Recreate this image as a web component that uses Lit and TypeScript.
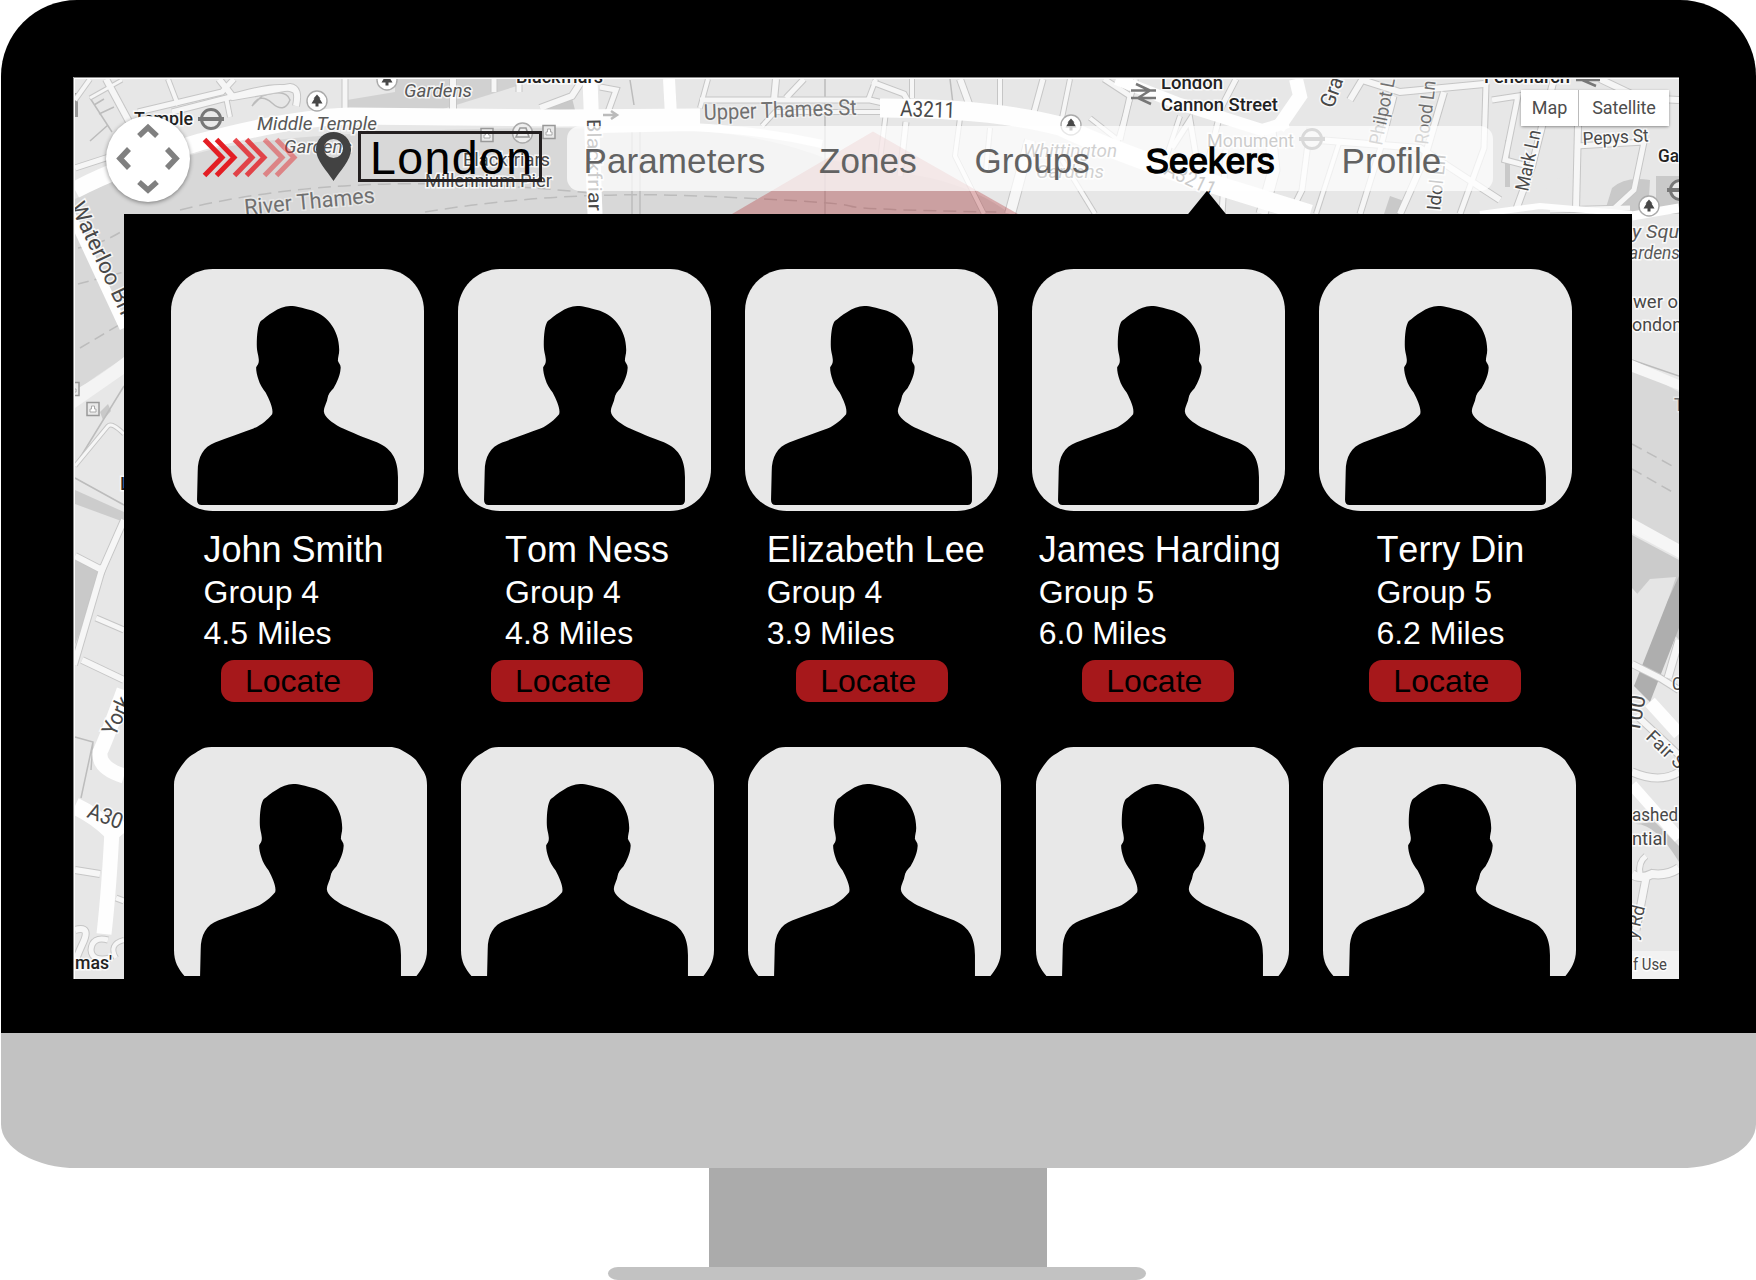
import { LitElement, html, svg, css } from "lit";
import { customElement, property } from "lit/decorators.js";
import { classMap } from "lit/directives/class-map.js";

interface Label {
  t: string;
  x: number;
  y: number;
  w?: number;
  s?: number;
  r?: number;
  k?: string;
}

interface Seeker {
  name: string;
  group: string;
  miles: string;
  indent: number;
  action: number;
}

// Streets as [path, width]
const STREETS: [string, number][] = [
  ["M75 168 L112 156 L140 138", 5],
  ["M75 100 L90 79", 4],
  ["M106 79 L134 131", 6],
  ["M90 98 L122 80", 3],
  ["M138 112 L222 92 L234 79", 5],
  ["M168 79 L178 105", 4],
  ["M219 79 L233 97 L290 87 Q300 88 296 106", 6],
  ["M172 112 L250 92 Q282 84 294 90", 5],
  ["M226 97 L230 117", 4],
  ["M345 79 L345 112", 5],
  ["M453 79 L453 110", 6],
  ["M494 79 L494 92", 5],
  ["M519 79 L519 92", 5],
  ["M540 108 L572 96 L583 79", 6],
  ["M608 112 L616 90 L600 87", 5],
  ["M700 108 L708 79", 4],
  ["M776 79 L774 100", 6],
  ["M786 98 L804 79", 5],
  ["M700 100 L870 100 L905 108", 5],
  ["M762 126 L775 112 L880 112", 4],
  ["M868 100 L876 79", 4],
  ["M872 82 L904 94 L914 112", 5],
  ["M912 79 L912 98", 4],
  ["M960 79 L972 112", 6],
  ["M1000 79 L1000 106", 4],
  ["M1043 79 L1034 112", 5],
  ["M1070 79 L1062 118", 4],
  ["M886 112 L880 160", 4],
  ["M906 122 L900 176", 5],
  ["M960 118 L955 156 L984 214", 4],
  ["M990 128 L986 170", 4],
  ["M1030 140 L1010 214", 10],
  ["M1062 160 L1095 214", 4],
  ["M1104 79 L1130 96 L1120 140", 5],
  ["M1090 118 L1118 140 L1136 79", 4],
  ["M1172 148 L1190 120 L1200 180", 5],
  ["M1180 116 L1162 170", 4],
  ["M1236 79 L1222 106 L1206 170", 5],
  ["M1226 150 L1222 214", 5],
  ["M1270 130 L1274 170 L1262 214", 11],
  ["M1310 128 L1302 190 L1290 214", 5],
  ["M1340 140 L1316 214", 4],
  ["M1350 100 L1362 80 L1400 92 L1484 84", 6],
  ["M1318 140 L1420 148 L1500 200", 6],
  ["M1394 96 L1380 150 L1360 214", 5],
  ["M1444 92 L1424 160 L1400 214", 6],
  ["M1486 84 L1484 148 L1460 214", 5],
  ["M1492 100 L1518 96 L1505 160 L1528 166", 5],
  ["M1554 79 L1532 166 L1516 210", 6],
  ["M1578 126 L1576 210", 6],
  ["M1550 210 L1630 208", 5],
  ["M1576 146 L1644 142 L1634 190 L1608 214", 5],
  ["M1600 79 L1640 98 L1679 100", 6],
  ["M75 466 L108 426 Q112 422 124 434", 3],
  ["M75 556 L102 570 L124 520", 6],
  ["M103 566 L74 665", 6],
  ["M96 618 L124 630", 5],
  ["M82 660 L124 680", 6],
  ["M75 870 L100 874", 6],
  ["M116 898 L124 901", 5],
  ["M75 930 Q92 925 82 945 Q76 958 75 964", 6],
  ["M108 940 Q92 936 91 950 Q92 962 110 958", 5],
  ["M124 940 Q108 944 116 958", 4],
  ["M1668 678 L1679 640", 7],
  ["M1632 664 L1660 678 L1679 690", 6],
  ["M1636 715 L1679 755", 6],
  ["M1632 772 Q1660 784 1679 772", 7],
  ["M1632 874 Q1640 880 1652 874 Q1668 876 1679 868", 8],
  ["M1640 874 Q1638 862 1646 856", 5],
  ["M1646 878 L1636 930", 7],
];

const AVENUES: [string, number][] = [
  ["M75 190 Q120 166 200 142 Q290 118 350 116 L560 118 L700 117", 17],
  ["M590 79 L595 214", 15],
  ["M669 79 L671 116", 12],
  ["M600 129 L690 127 Q760 130 822 144", 8],
  ["M880 108 Q990 108 1060 126 Q1110 150 1200 180 L1310 214", 19],
  ["M1116 79 L1180 104 L1262 130 L1288 122", 12],
  ["M1278 128 L1300 96 L1296 79", 14],
  ["M1480 214 L1540 206 L1632 214", 6],
  ["M1632 216 L1679 208", 9],
  ["M70 212 L124 328", 9],
  ["M124 690 Q106 740 100 752 Q98 768 124 776", 15],
  ["M75 806 Q96 816 112 832 L124 822", 17],
  ["M112 830 Q109 890 104 934", 15],
  ["M1650 702 L1679 734", 13],
  ["M1632 785 L1679 838", 11],
];

const LABELS: Label[] = [
  { t: "Gardens", x: 404, y: 96.5, w: 68, s: 19, k: "park" },
  { t: "Middle Temple", x: 257, y: 130, w: 120, s: 19, k: "park" },
  { t: "Gardens", x: 284, y: 153, w: 68, s: 19, k: "park" },
  { t: "Temple", x: 134, y: 125, w: 59, k: "place" },
  { t: "Blackfriars", x: 516, y: 83, w: 87, k: "place" },
  { t: "River Thames", x: 245, y: 215, w: 131, s: 22, r: -5.5, k: "water" },
  { t: "Blackfriars", x: 463, y: 166, w: 87 },
  { t: "Millennium Pier", x: 425, y: 187, w: 127 },
  { t: "Upper Thames St", x: 704, y: 120, w: 153, s: 22, r: -2, k: "water" },
  { t: "A3211", x: 900, y: 116, w: 55, s: 22, r: 2 },
  { t: "Blackfriar", x: 587, y: 119, w: 92, s: 19, r: 89 },
  { t: "Whittington", x: 1023, y: 157, w: 94, s: 19, k: "park" },
  { t: "Gardens", x: 1036, y: 178, w: 68, s: 19, k: "park" },
  { t: "London", x: 1161, y: 89, w: 62, k: "place" },
  { t: "Cannon Street", x: 1161, y: 110.5, w: 117, k: "place" },
  { t: "Monument", x: 1207, y: 147, w: 87 },
  { t: "A3211", x: 1163, y: 174, w: 54, s: 21, r: 25 },
  { t: "Gra", x: 1333, y: 109, w: 31, s: 21, r: -70 },
  { t: "Philpot L", x: 1382, y: 146, w: 68, s: 19, r: -79, k: "water" },
  { t: "Rood Ln", x: 1428, y: 145, w: 64, s: 19, r: -83, k: "water" },
  { t: "Idol Ln", x: 1440, y: 211, w: 56, s: 19, r: -84 },
  { t: "Mark Ln", x: 1528, y: 192, w: 62, s: 19, r: -78 },
  { t: "Pepys St", x: 1583, y: 145, w: 66, s: 18, r: -3 },
  { t: "Fenchurch", x: 1484, y: 83, w: 86, k: "place" },
  { t: "Ga", x: 1658, y: 162, w: 21, k: "place" },
  { t: "Waterloo Bri", x: 70, y: 206, w: 122, s: 22, r: 65 },
  { t: "L", x: 120, y: 490, s: 19, k: "place" },
  { t: "York", x: 115, y: 737, w: 40, s: 22, r: -65 },
  { t: "A30", x: 86, y: 817, w: 36, s: 22, r: 20 },
  { t: "mas'", x: 75, y: 969, w: 37, k: "place" },
  { t: "y Squ", x: 1632, y: 238, w: 47, s: 19, k: "park" },
  { t: "ardens", x: 1629, y: 259, w: 51, s: 18, k: "park" },
  { t: "wer o", x: 1633, y: 308, w: 45, s: 19 },
  { t: "ondon", x: 1632, y: 331, w: 50, s: 19 },
  { t: "T", x: 1674, y: 411, k: "water" },
  { t: "100", x: 1639, y: 734, w: 38, s: 22, r: -80 },
  { t: "Fair S", x: 1645, y: 738, w: 46, s: 18, r: 44 },
  { t: "C", x: 1672, y: 690, s: 19 },
  { t: "ashed", x: 1632, y: 821, w: 46, s: 19 },
  { t: "ntial", x: 1632, y: 845, w: 35, s: 19 },
  { t: "y Rd", x: 1637, y: 940, w: 34, s: 18, r: -76 },
];

const TREES = [[317, 101], [387, 80], [1071, 125], [1649, 206]];
const STATIONS = [[211, 119], [1312, 139], [1680, 190]];
const BOATS = [[487, 135], [549, 132], [73, 389], [93, 409]];

@customElement("city-map")
class CityMap extends LitElement {
  static styles = css`
    :host { display: block; background: #e7e7e7; }
    .canvas { display: block; width: 100%; height: 100%; }
    .label { font-family: Roboto, sans-serif; fill: #484848; stroke: #fff; stroke-width: 3px; stroke-opacity: 0.8; paint-order: stroke; }
    .park { font-style: italic; fill: #585858; }
    .place { font-weight: 500; fill: #222; }
    .water { fill: #707070; stroke-opacity: 0.4; }
  `;

  render() {
    return html`
      <svg class="canvas" viewBox="73 77 1606 902" preserveAspectRatio="none">
        <g fill="#c9c9c9">
          <path d="M395 79 H520 V85 L440 110 H347 V100 L395 92Z" opacity=".75" />
          <path d="M545 110 L572 98 L575 110Z" />
          <path d="M74 93 h4 v24 h-4z" fill="#999" />
          <path d="M75 560 L102 573 L75 645Z" />
          <path d="M1535 214 L1550 186 Q1560 178 1582 180 L1584 214Z" />
          <path d="M1604 214 L1612 188 Q1625 176 1650 180 L1648 214Z M1656 176 H1679 V214 H1656Z" />
          <path d="M1390 196 L1404 201 L1398 214 H1384Z" />
          <path d="M75 490 L124 512 V522 L75 504Z" opacity=".9" />
          <path d="M100 412 L108 404 L111 411 L103 420Z" />
          <path d="M1505 140 h5 v47 h-5z" />
        </g>
        <path d="M1533 214 L1550 182 Q1560 175 1586 178 V214Z" fill="#e7e7e7" />
        <path d="M75 199 Q130 170 210 150 Q300 130 560 128 L700 131 Q770 136 830 160 L930 178 Q980 190 1010 214 L124 214 V358 Q98 374 75 392Z" fill="#d8d8d8" />
        <path d="M1632 366 L1679 392 V554 L1632 518Z" fill="#d8d8d8" />
        <path d="M75 390 Q100 376 124 357 V374 L75 408Z" fill="#f4f4f4" />
        <g fill="none" stroke="#bcbcbc" stroke-width="1.5">
          <path d="M180 210 Q350 168 590 193" stroke-dasharray="13 7" />
          <path d="M425 212 Q560 190 700 196 T850 206 T1000 212" stroke-dasharray="13 7" />
          <path d="M78 248 Q100 245 124 230 M78 284 L124 272 M80 348 L124 322 M1632 444 L1676 468 M1632 469 L1676 494" stroke-dasharray="11 6" />
          <path d="M632 130 V214 M640 130 V214 M825 79 V214 M630 80 L634 105 M950 79 L953 104" />
          <path d="M1632 360 L1679 376 M75 478 L124 505 M75 737 L93 742 L81 798 M124 386 L75 466 M93 742 L91 770" />
          <path d="M252 106 Q260 92 272 103 T290 100 Q286 88 262 96 Z M90 98 L112 132 M94 105 L104 99 M99 114 L114 107 M108 125 L90 141" />
        </g>
        <path d="M1632 360 L1679 380 V390 L1632 372Z" fill="#f6f6f6" />
        <path d="M1632 518 L1679 544 V558 L1632 533Z" fill="#f6f6f6" />
        <path d="M1632 535 L1679 560 V640 L1632 588Z" fill="#cbcbcb" />
        <path d="M1632 600 L1650 579 L1676 577 L1664 612 L1640 680 H1632Z" fill="#e5e5e5" />
        <path d="M1679 576 L1668 600 L1634 686 L1650 702 L1679 628Z" fill="#aeaeae" />
        <path d="M1634 824 Q1655 822 1679 862 V846 L1655 822Z" fill="#c4c4c4" />
        <g fill="none" stroke="#c6c6c6">
          ${STREETS.map(([d, w]) => svg`<path d=${d} stroke-width=${w + 2} />`)}
        </g>
        <g fill="none" stroke="#f6f6f6">
          ${STREETS.map(([d, w]) => svg`<path d=${d} stroke-width=${w} />`)}
        </g>
        <g fill="none" stroke="#fefefe">
          ${AVENUES.map(([d, w]) => svg`<path d=${d} stroke-width=${w} />`)}
        </g>
        <path d="M603 115 H616 M611 111 L617 115 L611 119" fill="none" stroke="#bbb" stroke-width="2.5" />
        ${BOATS.map(([x, y]) => svg`
          <rect x=${x - 6} y=${y - 6.5} width="12" height="13" fill="#e9e9e9" stroke="#999" stroke-width="1.5" />
          <path d="M${x - 3} ${y + 3} h6 v-3 h-1.5 v-3 h-3 v3 h-1.5z" fill="#fff" stroke="#aaa" />`)}
        <circle cx="522.5" cy="133" r="10" fill="#eee" stroke="#aaa" stroke-width="1.5" />
        <path d="M516 137 L520 128 H526 L529 137Z M517 133 H528" fill="none" stroke="#999" stroke-width="1.6" />
        ${TREES.map(([x, y]) => svg`
          <circle cx=${x} cy=${y} r="10" fill="#fff" stroke="#aaa" stroke-width="1.4" />
          <path d="M${x} ${y - 6.5} l3.5 4 h-1 l3 5 h-4 v3 h-3 v-3 h-4 l3 -5 h-1z" fill="#484848" />`)}
        ${STATIONS.map(([x, y]) => svg`
          <circle cx=${x} cy=${y} r="9.5" fill="#e9e9e9" stroke="#777" stroke-width="3" />
          <path d="M${x - 13} ${y} h26" stroke="#777" stroke-width="4" />`)}
        <path d="M1131 90.5 h25 M1131 98 h25 M1136 84 l14 6.5 l-12 7.5 l13 6" fill="none" stroke="#777" stroke-width="2.5" />
        <path d="M1576 80 h24 M1580 79 l16 7" fill="none" stroke="#777" stroke-width="2.5" />
        ${LABELS.map((l) => svg`
          <text class="label ${l.k ?? ""}" font-size=${l.s ?? 18} x=${l.x} y=${l.y}
            textLength=${l.w ?? (l.t.length * (l.s ?? 18) * 0.54)} lengthAdjust="spacingAndGlyphs"
            transform="rotate(${l.r ?? 0} ${l.x} ${l.y})">${l.t}</text>`)}
        <path d="M1632 951 H1679 V979 H1632Z" fill="#f3f3f3" opacity=".9" />
        <text class="label" font-size="17" x="1633" y="969.5" textLength="34" lengthAdjust="spacingAndGlyphs">f Use</text>
        <path d="M873 131.5 L732 214 H1018Z" fill="#ae181b" fill-opacity=".29" />
        <path d="M74 979 V78 H1679" fill="none" stroke="#fff" stroke-width="2" />
        <path d="M73.5 979 V77.5 H1679" fill="none" stroke="#888" stroke-width="1" />
      </svg>
    `;
  }
}

@customElement("seeker-photo")
class SeekerPhoto extends LitElement {
  @property({ type: Boolean }) rough = false;

  static styles = css`
    :host { display: block; width: 253px; height: 242px; }
    .photo { display: block; width: 253px; height: 242px; }
  `;

  render() {
    const frame = this.rough
      ? "M63 171 C63 142 78 124 92 105 C106 86 122 78 140 67 C150 60 160 57 176 57 H708 C730 57 742 64 756 73 C768 80 778 86 788 96 L800 114 C812 132 821 142 821 171 V665 C821 700 806 722 790 742 L760 782 H124 L95 744 C76 720 63 702 63 665Z"
      : "M63 183 C63 113 119 57 189 57 H697 C767 57 821 113 821 183 V656 C821 726 767 782 697 782 H189 C119 782 63 726 63 656Z";
    return html`
      <svg class="photo" viewBox="63 57 758 725">
        <path d=${frame} fill="#e8e8e8" />
        <path d="M332 213 C350 200 385 168 420 168 C440 168 455 174 480 180 C525 191 567 235 567 300 C567 312 563 322 563 332 C566 342 573 343 571 356 C570 375 560 398 550 414 C540 424 534 432 532 444 C529 460 521 470 521 484 C523 502 545 517 570 531 C600 545 650 565 680 576 C730 597 743 635 743 680 V750 Q743 764 729 764 H155 Q141 764 141 748 L143 664 C143 620 160 590 195 577 C235 562 275 548 310 535 C335 524 352 508 366 492 C371 476 357 448 347 428 C337 414 329 402 325 388 C321 375 318 365 318 352 C321 345 327 342 326 328 C325 314 320 305 320 285 C320 255 323 224 332 213Z" />
      </svg>
    `;
  }
}

@customElement("seeker-card")
class SeekerCard extends LitElement {
  @property({ attribute: false }) seeker!: Seeker;

  static styles = css`
    :host { display: flex; flex-direction: column; color: #fff; font-kerning: none; }
    .info { margin-top: 18px; white-space: nowrap; }
    .name { font-size: 36px; line-height: 41px; }
    .meta { font-size: 32px; line-height: 41px; }
    .group { margin-top: 2px; }
    .locate {
      display: block; width: 152px; height: 42px; margin-top: 6px; padding: 0 8px 0 0;
      border: 0; border-radius: 13px; background: #a6181b; color: #000;
      font: 32px/42px "Liberation Sans", Arial, sans-serif; text-align: center;
    }
  `;

  render() {
    const s = this.seeker;
    return html`
      <seeker-photo></seeker-photo>
      <div class="info" style="padding-left:${s.indent}px">
        <div class="name">${s.name}</div>
        <div class="meta group">${s.group}</div>
        <div class="meta">${s.miles}</div>
      </div>
      <button class="locate" style="margin-left:${s.action}px">Locate</button>
    `;
  }
}

@customElement("app-root")
class AppRoot extends LitElement {
  private tabs = ["Parameters", "Zones", "Groups", "Seekers", "Profile"];

  private seekers: Seeker[] = [
    { name: "John Smith", group: "Group 4", miles: "4.5 Miles", indent: 32.5, action: 50 },
    { name: "Tom Ness", group: "Group 4", miles: "4.8 Miles", indent: 47, action: 33 },
    { name: "Elizabeth Lee", group: "Group 4", miles: "3.9 Miles", indent: 21.5, action: 51 },
    { name: "James Harding", group: "Group 5", miles: "6.0 Miles", indent: 6.5, action: 50 },
    { name: "Terry Din", group: "Group 5", miles: "6.2 Miles", indent: 57, action: 50 },
  ];

  static styles = css`
    :host { display: block; width: 1756px; height: 1280px; overflow: hidden; background: #fff; font-family: "Liberation Sans", Arial, sans-serif; }
    .computer { display: flex; flex-direction: column; align-items: center; height: 1280px; }
    .bezel { box-sizing: border-box; width: 1755px; height: 1033px; padding: 77px 76px 0 72.5px; background: #000; border-radius: 76px 76px 0 0; }
    .chin { width: 1755px; height: 135px; background: #c2c2c2; border-radius: 0 0 76px 76px / 0 0 44px 44px; }
    .neck { width: 338px; height: 99px; background: #ababab; }
    .foot { width: 538px; height: 13px; margin-right: 3px; background: #c2c2c2; border-radius: 10px / 6.5px; }
    .screen { position: relative; width: 1606px; height: 902px; overflow: hidden; }
    .backdrop { position: absolute; inset: 0; }
    .content { position: relative; display: flex; flex-direction: column; height: 902px; }
    .header { display: flex; align-items: flex-start; height: 137px; }
    .pan { width: 84px; height: 86px; margin: 38.5px 0 0 33px; border-radius: 50%; background: #fff; box-shadow: 0 1px 4px rgba(0, 0, 0, 0.45); flex: none; }
    .arrows { width: 96px; height: 42px; margin: 60px 0 0 12px; flex: none; }
    .pin { width: 36px; height: 50px; margin: 55px 0 0 18px; flex: none; }
    .city { box-sizing: border-box; width: 184px; height: 51px; margin: 54px 0 0 6px; padding-left: 9px; border: 3px solid #231f20; font-size: 46.5px; line-height: 48px; letter-spacing: 1.4px; white-space: nowrap; flex: none; }
    .tabs { box-sizing: border-box; display: grid; grid-template-columns: 235.5px 155.5px 171px 196px 150px; width: 926px; height: 65px; margin: 48.7px 0 0 24.5px; padding: 4px 0 0 17px; border-radius: 13px; background: rgba(255, 255, 255, 0.72); flex: none; }
    .tab { position: relative; font-size: 35px; line-height: 61px; letter-spacing: 0.1px; color: #626262; }
    .active { color: #000; -webkit-text-stroke: 1.4px #000; }
    .active::after { content: ""; position: absolute; left: 42px; top: 61px; width: 39px; height: 24px; background: #000; clip-path: polygon(50% 0, 100% 100%, 0 100%); }
    .modes { position: absolute; top: 13px; right: 10px; display: flex; height: 36px; gap: 1px; background: #bbb; border-radius: 2px; box-shadow: 0 1px 3px rgba(0, 0, 0, 0.4); font: 18px/36px Roboto, sans-serif; letter-spacing: -0.1px; color: #4d4d4d; text-align: center; }
    .mode { background: #fff; }
    .plain { width: 57px; }
    .photo-map { width: 90px; }
    .panel { box-sizing: border-box; width: 1508px; height: 765px; margin-left: 51px; padding: 55px 0 0 47px; background: #000; overflow: hidden; }
    .row { display: grid; grid-template-columns: repeat(5, 253px); column-gap: 34.1px; }
    .first { height: 478px; }
    .second { height: 229px; padding-left: 3.3px; overflow: hidden; }
  `;

  render() {
    return html`
      <div class="computer">
        <div class="bezel">
          <main class="screen">
            <city-map class="backdrop"></city-map>
            <div class="content">
              <header class="header">
                <svg class="pan" viewBox="0 0 84 86" fill="none" stroke="#808080" stroke-width="5.5">
                  <path d="M33 20 L42 11.5 L51 20 M33 66 L42 74 L51 66 M23 33 L14 42.500 L23 52 M61 33 L70 42.500 L61 52" />
                </svg>
                <svg class="arrows" viewBox="202 137 96 42" fill="none" stroke-width="5">
                  ${[[0, 1], [12, 1], [30, 0.8], [42, 0.8], [60, 0.45], [72, 0.45]].map(([dx, o]) => svg`
                    <path d="M${204.5 + dx} 139.5 L${222 + dx} 157.5 L${204.5 + dx} 175.5" stroke="#e31e24" stroke-opacity=${o} />`)}
                </svg>
                <svg class="pin" viewBox="0 0 36 50">
                  <path fill="#424242" fill-rule="evenodd" d="M17.5 0 C27 0 35 7 35 17.5 C35 28 24 39 17.5 49 C11 39 0 28 0 17.5 C0 7 8 0 17.5 0Z M17.5 7 A9.5 9.5 0 1 0 17.5 26 A9.5 9.5 0 1 0 17.5 7Z" />
                </svg>
                <div class="city">London</div>
                <nav class="tabs">
                  ${this.tabs.map((t) => html`<div class=${classMap({ tab: true, active: t === "Seekers" })}>${t}</div>`)}
                </nav>
              </header>
              <section class="panel">
                <div class="row first">
                  ${this.seekers.map((s) => html`<seeker-card .seeker=${s}></seeker-card>`)}
                </div>
                <div class="row second">
                  ${this.seekers.map(() => html`<seeker-photo rough></seeker-photo>`)}
                </div>
              </section>
            </div>
            <div class="modes">
              <div class="mode plain">Map</div>
              <div class="mode photo-map">Satellite</div>
            </div>
          </main>
        </div>
        <div class="chin"></div>
        <div class="neck"></div>
        <div class="foot"></div>
      </div>
    `;
  }
}
